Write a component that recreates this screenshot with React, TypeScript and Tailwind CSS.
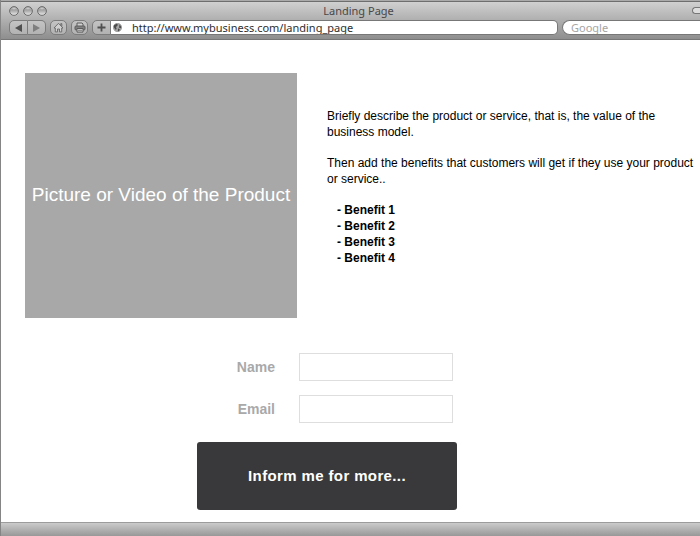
import { useState } from "react";
import type { FormEvent, ReactNode } from "react";

const BENEFITS = ["Benefit 1", "Benefit 2", "Benefit 3", "Benefit 4"];

const FIELDS = [
	{ id: "name", label: "Name", type: "text" },
	{ id: "email", label: "Email", type: "email" },
];

interface ToolButtonProps {
	label: string;
	className: string;
	children: ReactNode;
}

function ToolButton({ label, className, children }: ToolButtonProps) {
	return (
		<button
			type="button"
			aria-label={label}
			className={`flex h-[15px] shrink-0 items-center justify-center border border-[#7c7c7c] bg-linear-to-b from-[#c4c4c4] to-[#b2b2b2] ${className}`}
		>
			{children}
		</button>
	);
}

function WindowLight() {
	return (
		<svg width="10" height="10" viewBox="0 0 10 10">
			<defs>
				<linearGradient id="light" x1="0" y1="0" x2="0" y2="1">
					<stop offset="0" stopColor="#a2a2a2" />
					<stop offset="0.45" stopColor="#a8a8a8" />
					<stop offset="1" stopColor="#ececec" />
				</linearGradient>
			</defs>
			<circle cx="5" cy="5" r="4.4" fill="url(#light)" stroke="#6c6c6c" strokeWidth="1" />
			<ellipse cx="5" cy="2.4" rx="1.8" ry="0.8" fill="#dedede" opacity="0.6" />
		</svg>
	);
}

function HomeIcon() {
	return (
		<svg width="11" height="11" viewBox="0 0 11 11" fill="none" stroke="#666" strokeWidth="0.9">
			<path d="M1 6 5.5 1.3 10 6H8.7v3.9H6.5V7h-2v2.9H2.3V6Z" fill="#cfcfcf" />
			<path d="M7.8 3.4V1.6h1v2.8" />
		</svg>
	);
}

function PrinterIcon() {
	return (
		<svg width="12" height="11" viewBox="0 0 12 11" fill="none" stroke="#5c5c5c" strokeWidth="1">
			<path d="M3 4V1h5l1 1v2" fill="#d0d0d0" />
			<rect x="1" y="4" width="10" height="4" rx="1" fill="#808080" />
			<path d="M3 6.5h6v3.6H3Z" fill="#d0d0d0" />
			<path d="M4 8.3h4" strokeWidth="0.7" />
		</svg>
	);
}

function GlobeIcon() {
	return (
		<svg width="9" height="9" viewBox="0 0 9 9" className="shrink-0">
			<circle cx="4.5" cy="4.5" r="4.2" fill="#a6a6a6" stroke="#808080" strokeWidth="0.5" />
			<path
				d="M1 2.3 3.6.8l1.2.8-.5 1.5-1.5.8.8 1.3-.6 1.9L1.8 5.7.8 4ZM5.8 1.2l2 1.7.5 2-1.2.4-1.3-1.1.7-1.3ZM5 5.6l1.8.6-.7 1.8-1.3.3Z"
				fill="#4c4c4c"
			/>
		</svg>
	);
}

function BrowserBar() {
	const [url, setUrl] = useState("http://www.mybusiness.com/landing_page");

	return (
		<header className="h-10 overflow-hidden border-t border-b border-t-[#aaa] border-b-[#777] bg-linear-to-b from-[#d2d2d2] to-[#8e8e8e] font-['Noto_Sans',sans-serif]">
			{/* Title row */}
			<div className="grid h-[18px] grid-cols-[1fr_auto_1fr] items-center border-t border-[#6e6e6e] pl-2">
				<div className="flex gap-1">
					<WindowLight />
					<WindowLight />
					<WindowLight />
				</div>
				<h1 className="pl-2 text-[11px] leading-4 text-[#484848]">Landing Page</h1>
				<button
					type="button"
					aria-label="Toggle toolbar"
					className="h-[7px] w-2 justify-self-end rounded-l-full border border-r-0 border-[#777] bg-[#ddd]"
				/>
			</div>

			{/* Toolbar */}
			<div className="flex items-center pt-px pl-2">
				<ToolButton label="Back" className="w-[19px] rounded-l-[5px]">
					<svg width="7" height="8" viewBox="0 0 7 8" fill="#505050">
						<path d="M7 0v8L0 4Z" />
					</svg>
				</ToolButton>
				<ToolButton label="Forward" className="mr-1 w-[18px] rounded-r-[5px] border-l-0">
					<svg width="7" height="8" viewBox="0 0 7 8" fill="#7e7e7e">
						<path d="M0 0v8L7 4Z" />
					</svg>
				</ToolButton>
				<ToolButton label="Home" className="mr-1 w-[17px] rounded-[5px]">
					<HomeIcon />
				</ToolButton>
				<ToolButton label="Print" className="mr-1 w-[17px] rounded-[5px]">
					<PrinterIcon />
				</ToolButton>
				<ToolButton label="Add bookmark" className="w-[19px] rounded-l-[5px]">
					<svg width="9" height="9" viewBox="0 0 9 9" stroke="#505050" strokeWidth="1.8">
						<path d="M4.5 0.5v8M0.5 4.5h8" />
					</svg>
				</ToolButton>
				<div className="mr-1 flex h-[15px] min-w-0 flex-1 items-center gap-2.5 rounded-r-[5px] border border-l-0 border-[#777] bg-white pl-0.5">
					<GlobeIcon />
					<input
						aria-label="Address"
						value={url}
						onChange={(e) => setUrl(e.target.value)}
						className="h-[13px] min-w-0 flex-1 text-[11px] leading-3 text-[#2e2e2e] outline-none"
					/>
				</div>
				<input
					type="text"
					aria-label="Search"
					placeholder="Google"
					className="h-[15px] w-[138px] rounded-l-full border border-r-0 border-[#777] bg-white pl-2 text-[11px] leading-3 outline-none placeholder:text-[#a5a5a5]"
				/>
			</div>
		</header>
	);
}

function SignupForm() {
	const handleSubmit = (e: FormEvent) => {
		e.preventDefault();
	};

	return (
		<form onSubmit={handleSubmit} className="ml-[172px] flex w-[260px] flex-col gap-3.5">
			{FIELDS.map((field) => (
				<div key={field.id} className="flex items-center justify-end gap-6 pr-1">
					<label htmlFor={field.id} className="text-sm font-bold text-[#a9a9a9]">
						{field.label}
					</label>
					<input
						id={field.id}
						type={field.type}
						className="h-7 w-[154px] border border-[#dedede] px-2 text-sm outline-none"
					/>
				</div>
			))}
			<button
				type="submit"
				className="mt-[5px] h-[68px] rounded-[3px] bg-[#39393b] text-[15px] font-bold tracking-wide text-white"
			>
				Inform me for more...
			</button>
		</form>
	);
}

export default function App() {
	return (
		<div className="flex min-h-screen flex-col border-l border-[#858585] bg-white font-['Liberation_Sans',Arial,sans-serif] text-black">
			<BrowserBar />

			<main className="flex flex-1 flex-col gap-[35px] pt-[33px] pr-1 pb-3 pl-6">
				<section className="flex gap-[30px]">
					<div className="flex h-[245px] w-[272px] shrink-0 items-center justify-center bg-[#a8a8a8] text-[19px] text-white">
						Picture or Video of the Product
					</div>
					<div className="flex min-w-0 flex-1 flex-col gap-[15px] pt-[35px] text-xs leading-4">
						<p>
							Briefly describe the product or service, that is, the value of the{" "}
							<br />
							business model.
						</p>
						<p>
							Then add the benefits that customers will get if they use your
							product or service..
						</p>
						<ul className="pl-2.5 font-bold">
							{BENEFITS.map((benefit) => (
								<li key={benefit}>- {benefit}</li>
							))}
						</ul>
					</div>
				</section>

				<SignupForm />
			</main>

			<footer className="h-3.5 border-t border-[#9c9c9c] bg-linear-to-b from-[#cbcbcb] to-[#989898]" />
		</div>
	);
}
